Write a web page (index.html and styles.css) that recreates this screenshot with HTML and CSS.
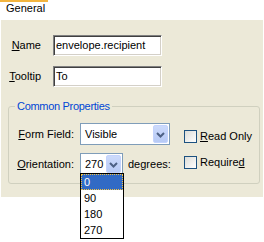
FILE: index.html
```html
<!DOCTYPE html>
<html lang="en">
<head>
    <meta charset="UTF-8">
    <title>Field Properties</title>
    <link rel="stylesheet" href="styles.css">
</head>
<body>
    <div class="tab">General</div>
    <div class="panel">
        <div class="row">
            <span class="lbl"><u>N</u>ame</span>
            <span class="field">envelope.recipient</span>
        </div>
        <div class="row">
            <span class="lbl"><u>T</u>ooltip</span>
            <span class="field">To</span>
        </div>
        <fieldset class="group">
            <legend>Common Properties</legend>
            <div class="group-body">
                <div class="grid">
                    <span class="glbl"><u>F</u>orm Field:</span>
                    <div class="combo wide"><span class="val">Visible</span><span class="btn"><svg width="9" height="6" viewBox="0 0 9 6"><polyline points="1,1 4.5,4.5 8,1" fill="none" stroke="#4D6185" stroke-width="2"/></svg></span></div>
                    <span class="glbl"><u>O</u>rientation:</span>
                    <div class="inline">
                        <div class="combo narrow"><span class="val">270</span><span class="btn"><svg width="9" height="6" viewBox="0 0 9 6"><polyline points="1,1 4.5,4.5 8,1" fill="none" stroke="#4D6185" stroke-width="2"/></svg></span></div>
                        <span class="unit">degrees:</span>
                    </div>
                </div>
                <div class="checks">
                    <div class="check"><span class="box"></span><span><u>R</u>ead Only</span></div>
                    <div class="check"><span class="box"></span><span>Require<u>d</u></span></div>
                </div>
            </div>
        </fieldset>
    </div>
    <ul class="list">
        <li class="sel">0</li>
        <li>90</li>
        <li>180</li>
        <li>270</li>
    </ul>
</body>
</html>
```

FILE: styles.css
```css
html, body { height: 242px; }
body { margin: 0; background: #fff; font: 11px/13px "Liberation Sans", Arial, sans-serif; color: #000; position: relative; }
u { text-underline-offset: 1px; }
.tab { width: 48px; box-sizing: border-box; border-top: 2px solid #F3B53F; padding: 0 0 5px 6px; }
.panel { background: #ECE9D8; margin-left: 1px; width: 262px; height: 177px; padding-top: 15px; box-sizing: border-box; }
.row { display: flex; align-items: center; height: 21px; margin-bottom: 10px; }
.row:last-of-type { margin-bottom: 0; }
.lbl { width: 40px; text-align: right; margin-right: 12px; }
.field { width: 109px; height: 21px; box-sizing: border-box; background: #fff; line-height: 17px; white-space: nowrap; overflow: hidden;
    border-top: 1px solid #808080; border-left: 1px solid #808080; border-right: 1px solid #fff; border-bottom: 1px solid #fff;
    box-shadow: inset 1px 1px 0 #404040, inset -1px -1px 0 #D4D0C8; padding-top: 1px; padding-left: 2px; }
.group { margin: 13px 0 0 7px; width: 252px; box-sizing: border-box; border: 1px solid #D0D0BF; border-radius: 3px; padding: 10px 0 8px 0; min-width: 0; }
.group legend { margin-left: 6px; padding: 0 2px; color: #0046D5; letter-spacing: -0.3px; }
.group-body { display: flex; }
.grid { display: grid; grid-template-columns: 71px 104px; row-gap: 8px; align-items: center; }
.glbl { text-align: right; padding-right: 6px; }
.combo { display: flex; height: 22px; box-sizing: border-box; border: 1px solid #7F9DB9; background: #fff; padding: 1px; }
.combo.wide { width: 90px; }
.combo.narrow { width: 43px; }
.val { flex: 1; line-height: 18px; padding-left: 3px; }
.btn { width: 15px; height: 18px; box-sizing: border-box; border: 1px solid #C3D3FD; border-radius: 2px; background: linear-gradient(#CCDAFB, #B7CAF5); display: flex; align-items: center; justify-content: center; padding-top: 1px; }
.inline { display: flex; align-items: center; }
.unit { margin-left: 5px; }
.checks { display: flex; flex-direction: column; gap: 13px; padding-top: 7px; }
.check { display: flex; align-items: center; height: 13px; }
.box { width: 13px; height: 13px; box-sizing: border-box; border: 1px solid #1C5180; background: linear-gradient(135deg, #DCDCD7, #fff); margin-right: 3px; }
.list { position: absolute; left: 80px; top: 173px; width: 44px; box-sizing: border-box; margin: 0; padding: 0; list-style: none; border: 1px solid #000; background: #fff; }
.list li { height: 16px; line-height: 17px; padding-left: 3px; }
.list .sel { background: #316AC5; color: #fff; outline: 1px dotted #F5C342; outline-offset: -1px; }
```
